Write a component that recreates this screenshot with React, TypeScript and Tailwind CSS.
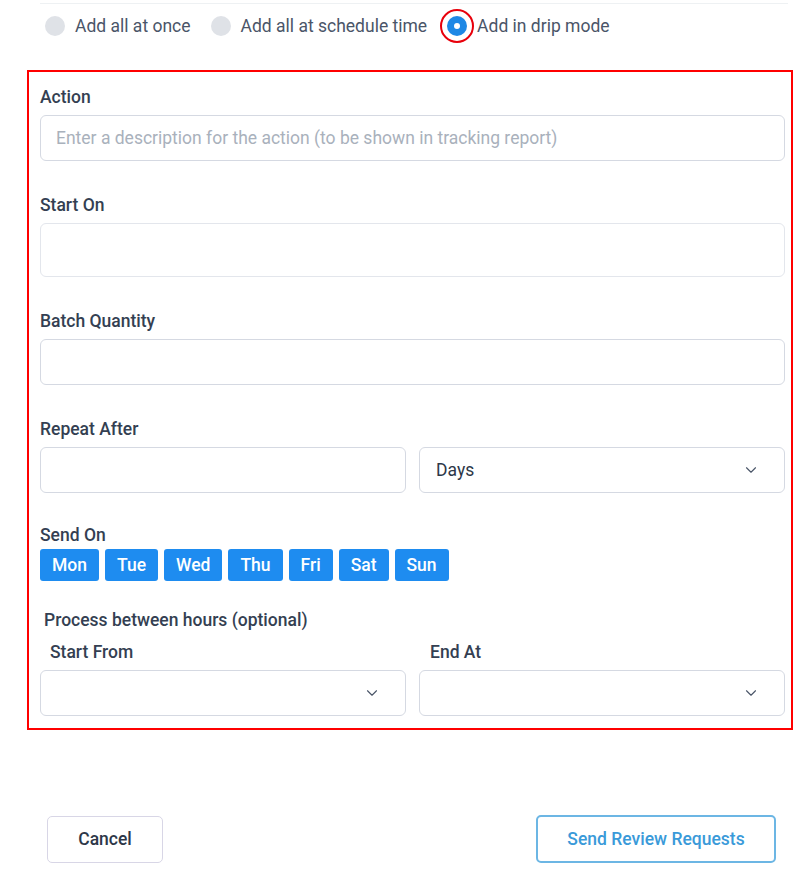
import { ChevronDown } from "lucide-react";

const days = ["Mon", "Tue", "Wed", "Thu", "Fri", "Sat", "Sun"];

function Label({ children, className = "" }: { children: React.ReactNode; className?: string }) {
  return <div className={`text-[17.5px] leading-[24px] font-medium text-[#343f52] ${className}`}>{children}</div>;
}

function SelectBox({ value }: { value?: string }) {
  return (
    <div className="h-[46px] rounded-[6px] border border-[#d5d9e2] flex items-center justify-between pl-[16px] pr-[24px]">
      <span className="text-[17.5px] text-[#2d3748]">{value}</span>
      <ChevronDown size={18} strokeWidth={1.5} className="text-[#4a5568]" />
    </div>
  );
}

export default function App() {
  return (
    <div className="w-[803px] h-[892px] bg-white font-['Roboto',sans-serif] relative">
      {/* top divider */}
      <div className="ml-[40px] mr-[15px] pt-[3px]">
        <div className="border-t border-[#eef1f3]" />
      </div>

      {/* mode radios */}
      <div className="flex items-center h-[44px] pl-[45px] text-[17.5px] text-[#4a5568]">
        <span className="w-[20px] h-[20px] rounded-full bg-[#dfe2e7]" />
        <span className="ml-[10px]">Add all at once</span>
        <span className="ml-[20px] w-[20px] h-[20px] rounded-full bg-[#dfe2e7]" />
        <span className="ml-[10px]">Add all at schedule time</span>
        <span className="ml-[13px] w-[34px] h-[34px] rounded-full border-[2px] border-[#e8000b] flex items-center justify-center">
          <span className="w-[20px] h-[20px] rounded-full bg-[#1e88e5] flex items-center justify-center">
            <span className="w-[6px] h-[6px] rounded-full bg-white" />
          </span>
        </span>
        <span className="ml-[3px]">Add in drip mode</span>
      </div>

      {/* drip settings */}
      <div className="ml-[27px] mt-[22px] w-[766px] border-[2px] border-[#ff0000] pt-[13px] pl-[11px] pr-[6px] pb-[12px]">
        <Label className="mb-[6px]">Action</Label>
        <div className="h-[46px] rounded-[6px] border border-[#d5d9e2] flex items-center px-[15px] text-[17.5px] text-[#a9b1bc]">
          Enter a description for the action (to be shown in tracking report)
        </div>

        <Label className="mt-[32px] mb-[6px]">Start On</Label>
        <div className="h-[54px] rounded-[6px] border border-[#e3e6ec]" />

        <Label className="mt-[32px] mb-[6px]">Batch Quantity</Label>
        <div className="h-[46px] rounded-[6px] border border-[#d5d9e2]" />

        <Label className="mt-[32px] mb-[6px]">Repeat After</Label>
        <div className="grid grid-cols-2 gap-[13px]">
          <div className="h-[46px] rounded-[6px] border border-[#d5d9e2]" />
          <SelectBox value="Days" />
        </div>

        <Label className="mt-[30px] mb-[2px]">Send On</Label>
        <div className="flex gap-[6px]">
          {days.map((d) => (
            <button
              key={d}
              className="h-[32px] px-[12px] rounded-[3px] bg-[#1e8cf0] text-white text-[17.5px] font-medium"
            >
              {d}
            </button>
          ))}
        </div>

        <Label className="mt-[27px] ml-[4px]">Process between hours (optional)</Label>
        <div className="grid grid-cols-2 gap-[13px] mt-[8px]">
          <div>
            <Label className="ml-[10px] mb-[6px]">Start From</Label>
            <SelectBox />
          </div>
          <div>
            <Label className="ml-[11px] mb-[6px]">End At</Label>
            <SelectBox />
          </div>
        </div>
      </div>

      {/* footer */}
      <div className="flex justify-between items-center pl-[47px] pr-[27px] mt-[85px]">
        <button className="w-[116px] h-[47px] rounded-[5px] border border-[#d8d6e6] text-[17.5px] font-medium text-[#2d3748]">
          Cancel
        </button>
        <button className="w-[240px] h-[48px] rounded-[5px] border-[2px] border-[#6cb6e4] text-[17.5px] font-medium text-[#3a9ad9]">
          Send Review Requests
        </button>
      </div>
    </div>
  );
}
